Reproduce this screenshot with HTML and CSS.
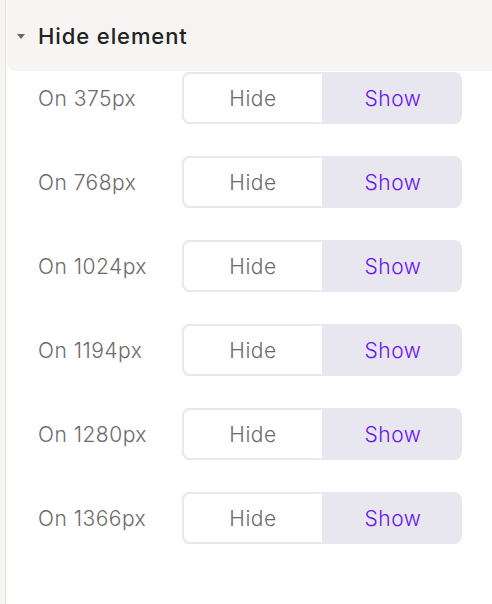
FILE: index.html
```html
<!DOCTYPE html>
<html lang="en">
<head>
  <meta charset="UTF-8">
  <meta name="viewport" content="width=device-width, initial-scale=1.0">
  <title>Hide element</title>
  <link rel="stylesheet" href="styles.css">
</head>
<body>
  <div class="layout">
    <div class="panel">
      <div class="section-header">
        <span class="caret"></span>
        <h2>Hide element</h2>
      </div>

      <!-- Breakpoint rows -->
      <div class="rows">
        <div class="row">
          <span class="row-label">On 375px</span>
          <div class="toggle">
            <button class="active">Hide</button>
            <button>Show</button>
          </div>
        </div>
        <div class="row">
          <span class="row-label">On 768px</span>
          <div class="toggle">
            <button class="active">Hide</button>
            <button>Show</button>
          </div>
        </div>
        <div class="row">
          <span class="row-label">On 1024px</span>
          <div class="toggle">
            <button class="active">Hide</button>
            <button>Show</button>
          </div>
        </div>
        <div class="row">
          <span class="row-label">On 1194px</span>
          <div class="toggle">
            <button class="active">Hide</button>
            <button>Show</button>
          </div>
        </div>
        <div class="row">
          <span class="row-label">On 1280px</span>
          <div class="toggle">
            <button class="active">Hide</button>
            <button>Show</button>
          </div>
        </div>
        <div class="row">
          <span class="row-label">On 1366px</span>
          <div class="toggle">
            <button class="active">Hide</button>
            <button>Show</button>
          </div>
        </div>
      </div>
    </div>
  </div>
</body>
</html>
```

FILE: styles.css
```css
:root {
  --panel-gray: #f6f5f3;
  --edge-color: #e6e4e1;
  --toggle-bg: #e8e7ef;
  --heading-color: #222;
  --label-color: #6b6b6b;
  --accent-color: #6a12f0;
}

* {
  box-sizing: border-box;
  margin: 0;
  padding: 0;
}

body {
  font-family: Inter, 'Noto Sans', sans-serif;
  background-color: white;
  width: 492px;
  height: 604px;
  overflow: hidden;
}

.layout {
  padding-left: 5px;
  background-color: var(--panel-gray);
  height: 604px;
}

.panel {
  background-color: white;
  border-left: 1px solid var(--edge-color);
  height: 100%;
}

.section-header {
  margin-left: 1px;
  height: 71px;
  background-color: var(--panel-gray);
  border-bottom-left-radius: 8px;
  display: flex;
  align-items: center;
  padding-left: 10px;
}

.caret {
  width: 0;
  height: 0;
  border-left: 4px solid transparent;
  border-right: 4px solid transparent;
  border-top: 5px solid #666;
  margin-right: 13px;
  margin-top: 1px;
}

.section-header h2 {
  font-size: 22px;
  font-weight: 500;
  color: var(--heading-color);
  letter-spacing: 0.9px;
}

.rows {
  display: flex;
  flex-direction: column;
  gap: 32px;
  padding: 1px 30px 0 32px;
}

.row {
  display: flex;
  align-items: center;
  height: 52px;
}

.row-label {
  width: 144px;
  font-size: 21px;
  font-weight: 350;
  color: var(--label-color);
  letter-spacing: 0.5px;
}

.toggle {
  display: flex;
  width: 280px;
  height: 52px;
  background-color: var(--toggle-bg);
  border-radius: 8px;
}

.toggle button {
  flex: 1;
  border: none;
  background: none;
  font-family: inherit;
  font-size: 21px;
  font-weight: 350;
  letter-spacing: 0.5px;
  color: var(--accent-color);
  cursor: pointer;
}

.toggle button.active {
  background-color: white;
  border: 2px solid var(--toggle-bg);
  border-radius: 8px 0 0 8px;
  color: var(--label-color);
}
```
